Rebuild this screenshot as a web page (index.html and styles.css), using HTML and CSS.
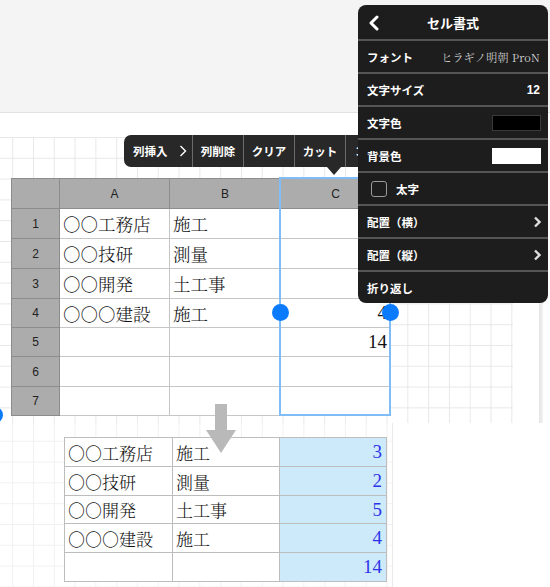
FILE: index.html
```html
<!DOCTYPE html>
<html lang="ja">
<head>
<meta charset="utf-8">
<title>セル書式</title>
<link rel="stylesheet" href="styles.css">
</head>
<body>
<div class="page">
  <header class="topbar"></header>

  <section class="sheet">
    <div class="grid">
      <table class="xl">
        <colgroup><col class="c0"><col class="c1"><col class="c2"><col class="c3"></colgroup>
        <tr class="hdr"><th class="corner"></th><th>A</th><th>B</th><th>C</th></tr>
        <tr class="r30"><th>1</th><td>○○工務店</td><td>施工</td><td class="num"></td></tr>
        <tr class="r30"><th>2</th><td>○○技研</td><td>測量</td><td class="num"></td></tr>
        <tr class="r30"><th>3</th><td>○○開発</td><td>土工事</td><td class="num"></td></tr>
        <tr class="r29"><th>4</th><td>○○○建設</td><td>施工</td><td class="num">4</td></tr>
        <tr class="r29"><th>5</th><td></td><td></td><td class="num">14</td></tr>
        <tr class="r30"><th>6</th><td></td><td></td><td></td></tr>
        <tr class="r29"><th>7</th><td></td><td></td><td></td></tr>
      </table>
    </div>
  </section>

  <section class="result">
    <div class="grid2">
      <table class="res">
        <colgroup><col class="d1"><col class="d2"><col class="d3"></colgroup>
        <tr class="q29"><td>○○工務店</td><td>施工</td><td class="val">3</td></tr>
        <tr class="q29"><td>○○技研</td><td>測量</td><td class="val">2</td></tr>
        <tr class="q28"><td>○○開発</td><td>土工事</td><td class="val">5</td></tr>
        <tr class="q29"><td>○○○建設</td><td>施工</td><td class="val">4</td></tr>
        <tr class="q29"><td></td><td></td><td class="val">14</td></tr>
      </table>
    </div>
  </section>

  <!-- overlays -->
  <div class="scrollstrip"></div>
  <div class="selection"></div>
  <div class="handle handle-l"></div>
  <div class="handle handle-r"></div>
  <div class="dot"></div>

  <svg class="down-arrow" width="31" height="50" viewBox="0 0 31 50">
    <rect x="9" y="0" width="12" height="27" fill="#b9b9b9"/>
    <polygon points="0,26 30,26 15,49" fill="#b9b9b9"/>
  </svg>

  <nav class="ctxmenu">
    <span class="mi mi-first">列挿入<svg class="mchev" width="8" height="12" viewBox="0 0 8 12"><path d="M1.5 1 L6.5 6 L1.5 11" fill="none" stroke="#fff" stroke-width="1.4"/></svg></span>
    <span class="mi">列削除</span>
    <span class="mi">クリア</span>
    <span class="mi">カット</span>
    <span class="mi mi-last">コピー</span>
  </nav>
  <div class="pointer"></div>

  <aside class="panel">
    <div class="ph">
      <svg class="back" width="12" height="16" viewBox="0 0 12 16"><path d="M9 2 L3 8 L9 14" fill="none" stroke="#fff" stroke-width="3" stroke-linecap="round" stroke-linejoin="round"/></svg>
      <span class="ptitle">セル書式</span>
    </div>
    <div class="prow"><span class="lbl">フォント</span><span class="fontval">ヒラギノ明朝 ProN</span></div>
    <div class="prow"><span class="lbl">文字サイズ</span><span class="numval">12</span></div>
    <div class="prow"><span class="lbl">文字色</span><span class="swatch sw-black"></span></div>
    <div class="prow"><span class="lbl">背景色</span><span class="swatch sw-white"></span></div>
    <div class="prow"><span class="check-wrap"><span class="checkbox"></span><span class="lbl">太字</span></span></div>
    <div class="prow"><span class="lbl">配置（横）</span><svg class="rchev" width="8" height="12" viewBox="0 0 8 12"><path d="M2 1.5 L6.5 6 L2 10.5" fill="none" stroke="#ddd" stroke-width="2.4"/></svg></div>
    <div class="prow"><span class="lbl">配置（縦）</span><svg class="rchev" width="8" height="12" viewBox="0 0 8 12"><path d="M2 1.5 L6.5 6 L2 10.5" fill="none" stroke="#ddd" stroke-width="2.4"/></svg></div>
    <div class="prow last"><span class="lbl">折り返し</span></div>
  </aside>
</div>
</body>
</html>
```

FILE: styles.css
```css
html, body {
  margin: 0;
  padding: 0;
  background: #fff;
}

.page {
  position: relative;
  width: 550px;
  height: 587px;
  overflow: hidden;
  background: #fff;
  font-family: "Noto Sans CJK JP", "Liberation Sans", sans-serif;
}

.topbar {
  height: 112px;
  background: #f4f4f4;
  border-bottom: 1px solid #e2e2e2;
}

.sheet {
  height: 286px;
  padding-top: 24px;
}

.grid {
  width: 513px;
  height: 286px;
  padding-top: 41px;
  padding-left: 11px;
  box-sizing: border-box;
  background-color: #fff;
  background-image:
    linear-gradient(to right, #e8e8e8 1px, transparent 1px),
    linear-gradient(to bottom, #e8e8e8 1px, transparent 1px);
  background-size: 20.8px 20.8px;
  background-position: 12.2px 0;
}

.xl {
  border-collapse: collapse;
  table-layout: fixed;
  width: 379px;
  background: #fff;
}

.c0 { width: 48px; }
.c1 { width: 110px; }
.c2 { width: 111px; }
.c3 { width: 110px; }

.xl th {
  background: #acacac;
  border: 1px solid #8c8c8c;
  font-family: "Liberation Sans", "Noto Sans CJK JP", sans-serif;
  font-weight: 400;
  font-size: 12px;
  color: #222;
  text-align: center;
  padding: 0;
}

.xl .hdr { height: 30px; }
.xl .r30 { height: 30px; }
.xl .r29 { height: 29px; }

.xl td {
  border: 1px solid #c6c6c6;
  padding: 0 3px;
  font-family: "Noto Serif CJK JP", "Noto Sans CJK JP", serif;
  font-weight: 300;
  font-size: 17.5px;
  color: #111;
  white-space: nowrap;
  overflow: hidden;
}

.xl td.num,
.res td.val {
  text-align: right;
  font-family: "Liberation Serif", serif;
  font-size: 19px;
  font-weight: 400;
}

.result {
  height: 164px;
}

.grid2 {
  width: 393px;
  height: 164px;
  box-sizing: border-box;
  padding-top: 14px;
  padding-left: 64px;
  border-right: 1px solid #e9e9e9;
  background-color: #fff;
  background-image:
    linear-gradient(to right, #f1f1f1 1px, transparent 1px),
    linear-gradient(to bottom, #f1f1f1 1px, transparent 1px);
  background-size: 20.8px 20.8px;
  background-position: 12.2px -3px;
}

.res {
  border-collapse: collapse;
  table-layout: fixed;
  width: 322px;
  background: #fff;
}

.d1 { width: 108px; }
.d2 { width: 107px; }
.d3 { width: 107px; }

.res .q29 { height: 29px; }
.res .q28 { height: 28px; }

.res td {
  border: 1.5px solid #bdbdbd;
  padding: 0 3px;
  font-family: "Noto Serif CJK JP", "Noto Sans CJK JP", serif;
  font-weight: 300;
  font-size: 17px;
  color: #111;
  white-space: nowrap;
  overflow: hidden;
}

.res td.val {
  background: #cdeafb;
  color: #2d34e8;
  padding-right: 4px;
}

/* overlays */
.scrollstrip {
  position: absolute;
  left: 539px;
  top: 113px;
  width: 4px;
  height: 310px;
  background: linear-gradient(to right, #e4e4e4, #f2f2f2);
}

.selection {
  position: absolute;
  left: 279px;
  top: 177px;
  width: 108px;
  height: 235px;
  border: 2px solid #80bdf7;
}

.handle {
  position: absolute;
  top: 304px;
  width: 17px;
  height: 17px;
  border-radius: 50%;
  background: #0a7bff;
}
.handle-l { left: 272px; }
.handle-r { left: 382px; }

.dot {
  position: absolute;
  left: -13px;
  top: 407px;
  width: 16px;
  height: 16px;
  border-radius: 50%;
  background: #0a7bff;
}

.down-arrow {
  position: absolute;
  left: 206px;
  top: 404px;
}

.ctxmenu {
  position: absolute;
  left: 124px;
  top: 135px;
  width: 240px;
  height: 32px;
  display: flex;
  background: #282828;
  border-radius: 7px 0 0 7px;
  overflow: hidden;
}

.mi {
  display: flex;
  align-items: center;
  justify-content: center;
  flex: none;
  width: 51px;
  color: #fff;
  font-size: 11.5px;
  font-weight: 700;
  border-left: 1px solid #6a6a6a;
  box-sizing: border-box;
  white-space: nowrap;
}

.mi-first {
  width: 68px;
  border-left: none;
  justify-content: flex-start;
  padding-left: 9px;
  gap: 11px;
}

.mi-last {
  justify-content: flex-start;
  padding-left: 9px;
  width: 19px;
  overflow: hidden;
}

.pointer {
  position: absolute;
  left: 327px;
  top: 167px;
  width: 0;
  height: 0;
  border-left: 7px solid transparent;
  border-right: 7px solid transparent;
  border-top: 8px solid #282828;
}

.panel {
  position: absolute;
  left: 358px;
  top: 5px;
  width: 190px;
  height: 298px;
  background: #1d1d1d;
  border-radius: 8px;
  display: flex;
  flex-direction: column;
  color: #fff;
  overflow: hidden;
}

.ph {
  position: relative;
  height: 34px;
  flex: none;
  display: flex;
  align-items: center;
  justify-content: center;
  border-bottom: 2px solid #555;
}

.back {
  position: absolute;
  left: 10px;
  top: 10px;
}

.ptitle {
  font-size: 13px;
  font-weight: 700;
}

.prow {
  height: 31px;
  flex: none;
  display: flex;
  align-items: center;
  justify-content: space-between;
  padding: 0 8px 0 9px;
  border-bottom: 2px solid #555;
}

.prow.last {
  border-bottom: none;
  flex: 1;
}

.lbl {
  font-size: 11.5px;
  font-weight: 700;
  color: #fff;
}

.fontval {
  font-family: "Noto Serif CJK JP", "Noto Sans CJK JP", serif;
  font-size: 11px;
  font-weight: 300;
  color: #e0e0e0;
  letter-spacing: 0.3px;
}

.numval {
  font-family: "Liberation Sans", sans-serif;
  font-size: 12px;
  font-weight: 700;
}

.swatch {
  width: 49px;
  height: 16px;
  margin-right: -1px;
  box-sizing: border-box;
}
.sw-black { background: #000; border: 1px solid #3a3a3a; }
.sw-white { background: #fff; }

.check-wrap {
  display: flex;
  align-items: center;
  gap: 9px;
  padding-left: 4px;
}

.checkbox {
  width: 16px;
  height: 16px;
  box-sizing: border-box;
  border: 1.5px solid #9a9a9a;
  border-radius: 3px;
}

.rchev {
  margin-right: -1px;
}
```
